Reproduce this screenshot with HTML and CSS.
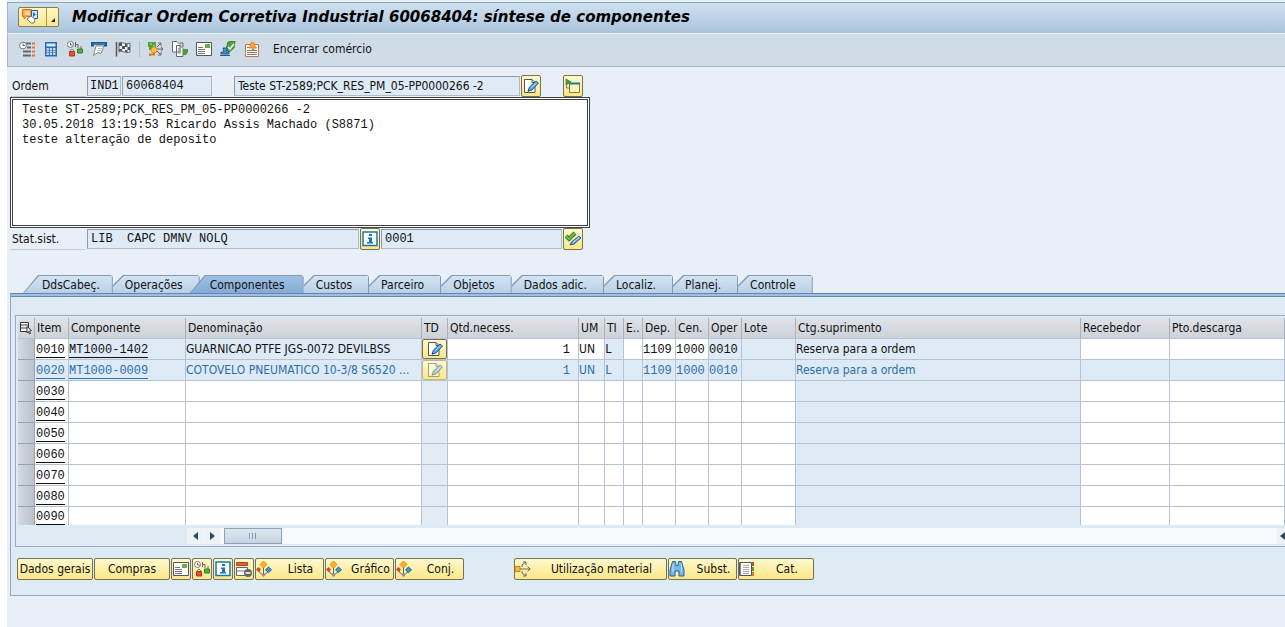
FILE: index.html
```html
<!DOCTYPE html>
<html lang="pt-BR">
<head>
<meta charset="utf-8">
<title>Modificar Ordem Corretiva Industrial</title>
<link rel="stylesheet" href="styles.css">
</head>
<body>
<svg class="defs" aria-hidden="true">
  <symbol id="i-clocklist" viewBox="0 0 16 16">
    <path d="M7 2.500h5M8 6.500h4M4 10.500h8M4 14.500h8" stroke="#666" stroke-width="2"/>
    <path d="M13 2.500h3M13 6.500h3M13 10.500h3M13 14.500h3" stroke="#e8762c" stroke-width="2"/>
    <circle cx="4" cy="4.500" r="3.400" fill="#fff" stroke="#777"/><path d="M4 2.500v2h2" fill="none" stroke="#555"/>
  </symbol>
  <symbol id="i-calc" viewBox="0 0 16 16">
    <path d="M2 1h12v14.500H2z" fill="#2b6ca8"/><path d="M3.500 2.500h9v3h-9z" fill="#d6e8f6"/>
    <path d="M3.500 8h9M3.500 10.500h9M3.500 13h9" stroke="#c4def2" stroke-width="1.800" stroke-dasharray="2.300 1"/>
  </symbol>
  <symbol id="i-clockbox" viewBox="0 0 16 16">
    <circle cx="3.500" cy="3.500" r="3" fill="#fff" stroke="#777"/><path d="M3.500 2v2h2" fill="none" stroke="#555"/>
    <path d="M8.500 1v5M8.500 3.500H11V7M14 5v3" fill="none" stroke="#666"/>
    <path d="M2.500 10.500h5V15h-5z" fill="#e2532b" stroke="#b33a1b"/><path d="M3 10l2-2 2 2" fill="#eee" stroke="#777"/>
    <path d="M10.500 8h5v4h-5z" fill="#55ad45" stroke="#347f2a"/>
  </symbol>
  <symbol id="i-card" viewBox="0 0 16 16">
    <path d="M0 1h16v4.500h-3V4H3v1.500H0z" fill="#1d5c93"/><path d="M2 3h12" stroke="#4f96cf"/>
    <path d="M5 5h8l-3 7.500-3-1-4.500 3 1-4z" fill="#fff" stroke="#888"/><path d="M7 7.500h4M6 9.500h4" stroke="#bbb"/>
  </symbol>
  <symbol id="i-flag" viewBox="0 0 16 16">
    <path d="M1.500 1v14.500" stroke="#555" stroke-width="1.500"/><path d="M4 2c3-2 5 2 11 0v9c-5 2-7-2-11 0z" fill="#eee" stroke="#666"/>
    <path d="M4 2h3v3H4zM10 3h2.500v3H10zM7 5h3v3H7zM12.500 6H15v3h-2.500zM4 8h3v2H4zM10 9h2.500v2H10z" fill="#555"/>
  </symbol>
  <symbol id="i-tree" viewBox="0 0 16 16">
    <path d="M9 6l4-4m-3 0h3v3M8 8h7m-2-2 2 2-2 2M9 10l4 4m0-3v3h-3" fill="none" stroke="#666"/>
    <path d="M0 1h8v5L5 9H1V6H0z" fill="#55a33a"/><path d="M2 3h2M5 5h2" stroke="#c4e39a"/>
    <circle cx="6" cy="9" r="3" fill="#ffc53a" stroke="#e88a1a"/><path d="M2 15v-1.500h4V12" fill="none" stroke="#e87820" stroke-width="2"/>
  </symbol>
  <symbol id="i-docs" viewBox="0 0 16 16">
    <path d="M.500.500H5l3 3V11H.500zM4.500 4.500H8l3 3v8H4.500z" fill="#fff" stroke="#666"/>
    <path d="M6 8h3M6 10h3M6 12h3" stroke="#888"/><path d="M12 8h4v3l-2 3h-3v-5z" fill="#4b9b35"/><path d="M8 2h3v4" fill="none" stroke="#666"/>
  </symbol>
  <symbol id="i-letter" viewBox="0 0 16 16">
    <path d="M.500 1.500h15v13H.500z" fill="#fff" stroke="#555"/><path d="M9 3h5v4H9z" fill="#67b04a"/>
    <path d="M2 6.500h5M2 8.500h7M2 10.500h7M2 12.500h7" stroke="#777"/>
  </symbol>
  <symbol id="i-stamp" viewBox="0 0 16 16">
    <path d="M8 1l7-1-1 7-5 4-3-3 1-3z" fill="#55a53f" stroke="#37802a"/><path d="M8 6l2 2 4-5" fill="none" stroke="#fff" stroke-width="1.500"/>
    <path d="M3 7h4l-1 4h3v2H1v-2h3zM0 14.500h10" fill="#4b93cc" stroke="#1f5c92"/>
  </symbol>
  <symbol id="i-bell" viewBox="0 0 16 16">
    <path d="M1.500 3.500h13v12h-13z" fill="#fff" stroke="#c07838"/><path d="M3 9.500h10M3 11.500h10M3 13.500h10M3 6.500h2" stroke="#777"/>
    <path d="M5 7c2-1 1-6 3.500-6S10 6 12.500 7z" fill="#ffa829" stroke="#e5761c"/><path d="M8 7.500h2V9H8z" fill="#e5761c"/>
  </symbol>
  <symbol id="i-edit" viewBox="0 0 16 16">
    <path d="M1.500 1.500H9l3 3v10H1.500z" fill="#fff" stroke="#555"/><path d="M9 1.500v3h3" fill="none" stroke="#555"/>
    <path d="M5 13l1.500-4L13 3l2.500 2-6.500 7z" fill="#5aa7de" stroke="#1c5d96"/><path d="M4.500 13.500l2-.500-1-1z" fill="#222"/><path d="M8.500 9.500L13.500 5" stroke="#b9def5"/>
  </symbol>
  <symbol id="i-open" viewBox="0 0 16 16">
    <path d="M4.500 5.500h10v9h-10z" fill="#fff6b8" stroke="#8a7c45"/><path d="M4 5.500h11" stroke="#2772ab" stroke-width="2"/>
    <path d="M1 1l5 3-5 3z" fill="#48983a" stroke="#48983a"/><path d="M1.500 2v8H4" fill="none" stroke="#777"/>
  </symbol>
  <symbol id="i-info" viewBox="0 0 16 16">
    <path d="M1 1h14v13.500H1z" fill="#fff" stroke="#1c75b4" stroke-width="1.500"/>
    <path d="M7 3h3v2H7zM6 6.500h4V11h1v1.500H5V11h2V8H6z" fill="#1c75b4"/>
  </symbol>
  <symbol id="i-okedit" viewBox="0 0 16 16">
    <path d="M1 5l3 3 6-6" fill="none" stroke="#2f7a25" stroke-width="4"/><path d="M1 5l3 3 6-6" fill="none" stroke="#73bd50" stroke-width="2"/>
    <path d="M5 14l1.500-3L14 5l2 2-7 6z" fill="#64a7dc" stroke="#275c91"/><path d="M8 11.500L14.500 6" stroke="#c3e1f5"/>
  </symbol>
  <symbol id="i-delrow" viewBox="0 0 16 16">
    <path d="M.500 1.500h11v3H.500z" fill="#e6602c" stroke="#b6451b"/><path d="M.500 6.500h11v8H.500z" fill="#fff" stroke="#666"/><path d="M0 10h9" stroke="#777"/>
    <circle cx="12" cy="12" r="4" fill="#666"/><path d="M9.500 12h5" stroke="#fff" stroke-width="1.500"/>
  </symbol>
  <symbol id="i-diamonds" viewBox="0 0 16 16">
    <path d="M7.500 5v9M3 9c0 3 2 4 4.500 4.500C10 13 12 12 12 9" fill="none" stroke="#666"/>
    <path d="M7.500 0L11 3.500 7.500 7 4 3.500z" fill="#ffb31f" stroke="#e48a16"/><path d="M2.500 6L5 8.500 2.500 11 0 8.500z" fill="#df4522"/>
    <path d="M12.500 6l3 2.800-3 2.800-3-2.800z" fill="#4796ca" stroke="#1f5d91"/><path d="M7.500 13l1.800 1.500L7.500 16l-1.800-1.500z" fill="#9a8acb"/>
  </symbol>
  <symbol id="i-spread" viewBox="0 0 16 16">
    <path d="M0 5.500h5v5H0z" fill="#ffb42b" stroke="#d98516"/><path d="M5 8h10.500m-3-2.500 2.500 2.500-2.500 2.500M7 6V4l4-3m-3 0h3v3M7 10v2l4 3m-3 0h3v-3" fill="none" stroke="#666"/>
  </symbol>
  <symbol id="i-binoc" viewBox="0 0 16 16">
    <path d="M3.500.500h3l.500 4h2l.500-4h3L15 9v6h-5v-5H6v5H1V9z" fill="#75b7e5" stroke="#1e659c"/><path d="M4 3v8M12.500 3v8" stroke="#c5e3f7"/>
  </symbol>
  <symbol id="i-book" viewBox="0 0 16 16">
    <path d="M.500 1.500h12v13H.500z" fill="#fff" stroke="#555"/><path d="M1.500 2v12" stroke="#888"/><path d="M4 4.500h6M4 6.500h6M4 8.500h6M4 10.500h6M4 12.500h6" stroke="#aaa"/>
    <path d="M14 1v4" stroke="#d9402a" stroke-width="2"/><path d="M14 6v4" stroke="#4b9c3c" stroke-width="2"/><path d="M14 11v4" stroke="#e17a2a" stroke-width="2"/>
  </symbol>
  <symbol id="i-menu" viewBox="0 0 16 16">
    <path d="M.500.500h9v7h-5L2 10V7.500H.500z" fill="#ffa640" stroke="#d87420"/><path d="M2.500 3h5M2.500 5h5" stroke="#fff"/>
    <path d="M9.500 1.500h6v8h-6z" fill="#d5eafa" stroke="#1f609a"/><path d="M11 3l3 2.500L11 8z" fill="#1f75b5"/>
    <path d="M5 10l4-3 4 3-1 4H9z" fill="#fff" stroke="#777"/>
  </symbol>
  <symbol id="i-select" viewBox="0 0 14 14">
    <path d="M1.500 1.500h8v9h-8zM1.500 4h8M1.500 7h8" fill="#fff" stroke="#333"/><path d="M8 5.500l4.500 4-2 .500 1 2.500-1 .500-1-2.500L8 12z" fill="#fff" stroke="#333"/>
  </symbol>
</svg>

<div class="app">
  <header class="titlebar">
    <div class="menu-split">
      <button class="menu-main" type="button" aria-label="Serviços"><svg class="icon"><use href="#i-menu"/></svg></button>
      <button class="menu-drop" type="button" aria-label="Mais"></button>
    </div>
    <h1>Modificar Ordem Corretiva Industrial 60068404: síntese de componentes</h1>
  </header>

  <div class="toolbar">
    <button type="button" aria-label="Datas"><svg class="icon"><use href="#i-clocklist"/></svg></button>
    <button type="button" aria-label="Calcular"><svg class="icon"><use href="#i-calc"/></svg></button>
    <button type="button" aria-label="Programar"><svg class="icon"><use href="#i-clockbox"/></svg></button>
    <button type="button" aria-label="Imprimir"><svg class="icon"><use href="#i-card"/></svg></button>
    <button type="button" aria-label="Encerrar"><svg class="icon"><use href="#i-flag"/></svg></button>
    <span class="sep"></span>
    <button type="button" aria-label="Estrutura"><svg class="icon"><use href="#i-tree"/></svg></button>
    <button type="button" aria-label="Documentos"><svg class="icon"><use href="#i-docs"/></svg></button>
    <button type="button" aria-label="Carta"><svg class="icon"><use href="#i-letter"/></svg></button>
    <button type="button" aria-label="Autorização"><svg class="icon"><use href="#i-stamp"/></svg></button>
    <button type="button" aria-label="Nota"><svg class="icon"><use href="#i-bell"/></svg></button>
    <button class="text" type="button">Encerrar comércio</button>
  </div>

  <main>
    <section class="head">
      <div class="field-row">
        <label for="ordem">Ordem</label>
        <input class="mono w-type" id="tipo" aria-label="Tipo de ordem" value="IND1" readonly>
        <input class="mono w-order" id="ordem" value="60068404" readonly>
        <input class="w-text" aria-label="Texto breve" value="Teste ST-2589;PCK_RES_PM_05-PP0000266 -2" readonly>
        <button class="btn square" type="button" aria-label="Texto descritivo"><svg class="icon"><use href="#i-edit"/></svg></button>
        <button class="btn square apart" type="button" aria-label="Abrir"><svg class="icon"><use href="#i-open"/></svg></button>
      </div>
      <textarea class="mono" aria-label="Texto descritivo" spellcheck="false">Teste ST-2589;PCK_RES_PM_05-PP0000266 -2
30.05.2018 13:19:53 Ricardo Assis Machado (S8871)
teste alteração de deposito</textarea>
      <div class="field-row">
        <label for="stat">Stat.sist.</label>
        <input class="mono w-stat" id="stat" value="LIB  CAPC DMNV NOLQ" readonly>
        <button class="btn square" type="button" aria-label="Status"><svg class="icon"><use href="#i-info"/></svg></button>
        <input class="mono w-user" aria-label="Status do usuário" value="0001" readonly>
        <button class="btn square" type="button" aria-label="Definir status"><svg class="icon"><use href="#i-okedit"/></svg></button>
      </div>
    </section>

    <nav class="tabs" role="tablist">
      <button type="button" role="tab" class="first"><span>DdsCabeç.</span></button>
      <button type="button" role="tab"><span>Operações</span></button>
      <button type="button" role="tab" class="active" aria-selected="true"><span>Componentes</span></button>
      <button type="button" role="tab"><span>Custos</span></button>
      <button type="button" role="tab"><span>Parceiro</span></button>
      <button type="button" role="tab"><span>Objetos</span></button>
      <button type="button" role="tab"><span>Dados adic.</span></button>
      <button type="button" role="tab"><span>Localiz.</span></button>
      <button type="button" role="tab"><span>Planej.</span></button>
      <button type="button" role="tab"><span>Controle</span></button>
    </nav>

    <section class="panel">
      <div class="grid-box">
        <table>
          <colgroup><col class="c-sel"><col class="c-item"><col class="c-comp"><col class="c-den"><col class="c-um"><col class="c-qty"><col class="c-um"><col class="c-ti"><col class="c-ti"><col class="c-code"><col class="c-code"><col class="c-code"><col class="c-lote"><col class="c-ctg"><col class="c-rec"><col></colgroup>
          <thead>
            <tr><th class="pick"><svg><use href="#i-select"/></svg></th><th>Item</th><th>Componente</th><th>Denominação</th><th>TD</th><th>Qtd.necess.</th><th>UM</th><th>TI</th><th>E..</th><th>Dep.</th><th>Cen.</th><th>Oper</th><th>Lote</th><th>Ctg.suprimento</th><th>Recebedor</th><th>Pto.descarga</th></tr>
          </thead>
          <tbody>
            <tr><td class="sel"></td><td class="mono item"><a href="#0010">0010</a></td><td class="ro mono"><a href="#c1">MT1000-1402</a></td><td class="ro">GUARNICAO PTFE JGS-0072 DEVILBSS</td><td class="td"><button class="btn cell" type="button" aria-label="Texto do item"><svg class="icon"><use href="#i-edit"/></svg></button></td><td class="mono num"><input aria-label="Quantidade" value="1"></td><td><input aria-label="Unidade" value="UN"></td><td class="ro mono">L</td><td><input aria-label="E"></td><td class="mono"><input aria-label="Depósito" value="1109"></td><td class="mono"><input aria-label="Centro" value="1000"></td><td class="ro mono">0010</td><td class="ro"></td><td class="ro">Reserva para a ordem</td><td><input aria-label="Recebedor"></td><td><input aria-label="Ponto de descarga"></td></tr>
            <tr class="locked"><td class="sel"></td><td class="mono item"><a href="#0020">0020</a></td><td class="mono"><a href="#c2">MT1000-0009</a></td><td>COTOVELO PNEUMATICO 10-3/8 S6520 ...</td><td class="td"><button class="btn cell" type="button" disabled aria-label="Texto do item"><svg class="icon"><use href="#i-edit"/></svg></button></td><td class="mono num">1</td><td>UN</td><td class="mono">L</td><td></td><td class="mono">1109</td><td class="mono">1000</td><td class="mono">0010</td><td></td><td>Reserva para a ordem</td><td></td><td></td></tr>
            <tr><td class="sel"></td><td class="mono item"><a href="#0030">0030</a></td><td></td><td></td><td class="td"></td><td></td><td></td><td></td><td></td><td></td><td></td><td></td><td></td><td class="ro"></td><td></td><td></td></tr>
            <tr><td class="sel"></td><td class="mono item"><a href="#0040">0040</a></td><td></td><td></td><td class="td"></td><td></td><td></td><td></td><td></td><td></td><td></td><td></td><td></td><td class="ro"></td><td></td><td></td></tr>
            <tr><td class="sel"></td><td class="mono item"><a href="#0050">0050</a></td><td></td><td></td><td class="td"></td><td></td><td></td><td></td><td></td><td></td><td></td><td></td><td></td><td class="ro"></td><td></td><td></td></tr>
            <tr><td class="sel"></td><td class="mono item"><a href="#0060">0060</a></td><td></td><td></td><td class="td"></td><td></td><td></td><td></td><td></td><td></td><td></td><td></td><td></td><td class="ro"></td><td></td><td></td></tr>
            <tr><td class="sel"></td><td class="mono item"><a href="#0070">0070</a></td><td></td><td></td><td class="td"></td><td></td><td></td><td></td><td></td><td></td><td></td><td></td><td></td><td class="ro"></td><td></td><td></td></tr>
            <tr><td class="sel"></td><td class="mono item"><a href="#0080">0080</a></td><td></td><td></td><td class="td"></td><td></td><td></td><td></td><td></td><td></td><td></td><td></td><td></td><td class="ro"></td><td></td><td></td></tr>
            <tr class="last"><td class="sel"></td><td class="mono item"><a href="#0090">0090</a></td><td></td><td></td><td class="td"></td><td></td><td></td><td></td><td></td><td></td><td></td><td></td><td></td><td class="ro"></td><td></td><td></td></tr>
          </tbody>
        </table>
        <div class="scroll">
          <button type="button" class="arrow left" aria-label="Rolar à esquerda"></button>
          <button type="button" class="arrow right" aria-label="Rolar à direita"></button>
          <div class="track"><div class="thumb"><i></i></div></div>
          <button type="button" class="arrow left end" aria-label="Página à esquerda"></button>
        </div>
      </div>

      <div class="actions">
        <button class="btn wide" type="button"><span>Dados gerais</span></button>
        <button class="btn wide" type="button"><span>Compras</span></button>
        <button class="btn square" type="button" aria-label="Texto"><svg class="icon"><use href="#i-letter"/></svg></button>
        <button class="btn square" type="button" aria-label="Programar"><svg class="icon"><use href="#i-clockbox"/></svg></button>
        <button class="btn square" type="button" aria-label="Informação"><svg class="icon"><use href="#i-info"/></svg></button>
        <button class="btn square" type="button" aria-label="Eliminar linha"><svg class="icon"><use href="#i-delrow"/></svg></button>
        <button class="btn mid" type="button"><svg class="icon"><use href="#i-diamonds"/></svg><span>Lista</span></button>
        <button class="btn mid" type="button"><svg class="icon"><use href="#i-diamonds"/></svg><span>Gráfico</span></button>
        <button class="btn mid" type="button"><svg class="icon"><use href="#i-diamonds"/></svg><span>Conj.</span></button>
        <button class="btn long" type="button"><svg class="icon"><use href="#i-spread"/></svg><span>Utilização material</span></button>
        <button class="btn mid" type="button"><svg class="icon"><use href="#i-binoc"/></svg><span>Subst.</span></button>
        <button class="btn wide" type="button"><svg class="icon"><use href="#i-book"/></svg><span>Cat.</span></button>
      </div>
    </section>
  </main>
</div>
</body>
</html>
```
FILE: styles.css
```css
* { box-sizing: border-box; }

:root {
  --sans: "DejaVu Sans Condensed", "Noto Sans", sans-serif;
  --mono: "Liberation Mono", monospace;
  --line: #b7c2d3;
  --ro: #deeaf5;
}

body {
  margin: 0;
  background: #fff;
  color: #111;
  font: 12px/16px var(--sans);
  overflow-x: hidden;
}

button, input, textarea { font: inherit; color: inherit; margin: 0; }
button { padding: 0; border: 0; background: none; }
.defs { position: absolute; width: 0; height: 0; }
.icon { display: block; flex: none; width: 16px; height: 16px; }
.mono, .mono input { font-family: var(--mono); }

.app {
  min-height: 100vh;
  margin-left: 7px;
  padding-top: 2px;
  background: #e8eff6;
}

.titlebar {
  display: flex;
  align-items: center;
  gap: 13px;
  height: 31px;
  padding: 0 10px 2px;
  border-top: 1px solid #8ea5c2;
  border-left: 1px solid #a5b7cf;
  background: linear-gradient(#cfe0ee, #bdd3e7 50%, #a9c3dc);
}

h1 {
  margin: 0;
  font-family: "DejaVu Sans", sans-serif;
  font-size: 15px;
  line-height: 24px;
  font-style: italic;
  font-weight: bold;
  color: #000;
  white-space: nowrap;
}

.menu-split {
  display: flex;
  height: 20px;
  border: 1px solid #8b7d49;
  border-radius: 2px;
  background: linear-gradient(#fff8c4, #fbe793);
}
.menu-main { display: flex; justify-content: center; align-items: center; width: 28px; padding-right: 6px; border-right: 1px solid #a99a5c; }
.menu-drop { display: flex; justify-content: center; align-items: flex-end; width: 11px; padding-bottom: 4px; }
.menu-drop::after { content: ""; border-left: 4px solid transparent; border-bottom: 4px solid #222; }

.toolbar {
  display: flex;
  align-items: center;
  gap: 8px;
  height: 34px;
  padding: 0 11px 2px;
  border: solid #a5b6cd;
  border-width: 0 0 1px 1px;
  border-top: 1px solid #e9f0f6;
  background: #cfdce8;
}
.sep { width: 1px; height: 16px; background: #a9bccd; }
.toolbar .text { margin-left: 5px; }

.head { width: 580px; margin: 8px 0 0 3px; }
.field-row { display: flex; align-items: center; height: 22px; gap: 1px; }
.field-row label {
  width: 76px;
  padding-left: 2px;
  line-height: 20px;
  border-bottom: 1px solid #c6ced8;
}
.field-row input {
  height: 20px;
  padding: 0 3px;
  border: 1px solid;
  border-color: #939ca6 #b3bac2 #b3bac2 #939ca6;
  outline: 0;
  background: var(--ro);
}
.field-row .w-type { width: 34px; padding: 0 2px; }
.w-order { width: 90px; margin-right: 21px; }
.w-text { width: 286px; }
.w-stat { width: 272px; }
.w-user { flex: 1; }
.field-row .apart { margin-left: 21px; }
.field-row:last-child .square:last-child { margin-right: 7px; }

textarea {
  display: block;
  width: 100%;
  height: 131px;
  padding: 3px 9px;
  border: 3px double #3d4045;
  outline: 0;
  resize: none;
  line-height: 15px;
  background: #fff;
}

.btn {
  display: flex;
  align-items: center;
  height: 22px;
  border: 1px solid #77724f;
  border-radius: 2px;
  background: linear-gradient(#fff9d0, #fdeea2 60%, #fbe68a);
  color: #111;
  white-space: nowrap;
}
.btn span { flex: 1; text-align: center; }
.btn .icon + span { padding-left: 6px; }
.square { justify-content: center; width: 20px; }

.tabs { display: flex; height: 18px; margin: 25px 0 0 16px; }
.tabs button {
  position: relative;
  z-index: 0;
  height: 18px;
  padding: 2px 17px 0 12px;
  white-space: nowrap;
}
.tabs .first { padding: 2px 13px 0 19px; }
.tabs button::before, .tabs button::after {
  content: "";
  position: absolute;
  z-index: -1;
  inset: 0;
  background: #8499b8;
  clip-path: polygon(0 10px, 10px 0, calc(100% - 2px) 0, 100% 2px, 100% 100%, 0 100%);
}
.tabs button::after {
  inset: 1px 1px 0 0;
  background: linear-gradient(#d3e4f2, #b8d0e8);
  clip-path: polygon(1px 10px, 11px 0, 100% 0, 100% 100%, 0 100%, 0 11px);
}
.tabs .first::before, .tabs .active::before { clip-path: polygon(0 100%, 15px 0, calc(100% - 2px) 0, 100% 2px, 100% 100%); }
.tabs .first::after, .tabs .active::after { clip-path: polygon(1px 100%, 16px 0, 100% 0, 100% 100%); }
.tabs .active { z-index: 1; padding: 2px 19px 0 10px; }
.tabs .active::before, .tabs .active::after { left: -10px; }
.tabs .active::after { background: linear-gradient(#9fc0e3, #84abd7); }

.panel {
  margin-left: 3px;
  padding: 21px 0 15px 4px;
  border: 1px solid #8fa8c8;
  border-top-color: #6386b2;
  border-right: 0;
  background: #deebf5;
  box-shadow: inset 0 2px #a3bedc, inset 0 3px #6386b2;
}

.grid-box {
  padding: 2px 0 2px 2px;
  border: 1px solid #94abc6;
  border-right: 0;
}

table {
  width: 100%;
  border-collapse: separate;
  border-spacing: 0;
  table-layout: fixed;
}
.c-sel { width: 17px; } .c-item { width: 34px; } .c-comp { width: 117px; }
.c-den { width: 236px; } .c-um { width: 26px; } .c-qty { width: 131px; }
.c-ti { width: 19px; } .c-code { width: 33px; } .c-lote { width: 54px; }
.c-ctg { width: 285px; } .c-rec { width: 89px; }

th, td {
  height: 21px;
  padding: 0;
  border-right: 1px solid var(--line);
  border-bottom: 1px solid var(--line);
  overflow: hidden;
  white-space: nowrap;
  line-height: 18px;
  text-align: left;
}
th { padding-left: 2px; font-weight: normal; background: linear-gradient(#dfe2e7, #ced2d9); border-right-color: #a9b1bc; }
th.pick { padding: 0 0 0 1px; }
.pick svg { display: block; width: 14px; height: 14px; }
td { background: #fff; }
td.mono { padding-top: 1px; }
td.item { padding-left: 1px; }
.ro, .locked td { background: var(--ro); }
.locked td { color: #2a6fae; }
td.td { background: #e3ebf3; }
td.sel { background: linear-gradient(90deg, #d4dae1, #b9c1cc); border-color: #98a3b2; }
.last td { height: 18px; border-bottom: 0; line-height: 16px; }
td input { display: block; width: 100%; height: 18px; padding: 0; border: 0; outline: 0; background: none; }
.num, .num input { text-align: right; }
td.num { padding-right: 8px; }
td a { color: inherit; text-decoration: none; border-bottom: 1px solid; }
.cell { justify-content: center; width: 25px; height: 20px; }
.cell:disabled { border-color: #bdb893; }
.cell:disabled .icon { opacity: .5; }

.scroll { display: flex; height: 16px; margin: 3px 0 0 169px; background: #f3f6fb; }
.arrow { display: flex; align-items: center; justify-content: center; width: 16px; margin-right: 1px; background: #eef3f9; }
.arrow::after { content: ""; border: 4px solid transparent; }
.left::after { border-right: 5px solid #34495c; border-left: 0; }
.right::after { border-left: 5px solid #34495c; border-right: 0; }
.track { flex: 1; padding-left: 3px; background: #f8fafd; }
.thumb { display: flex; align-items: center; justify-content: center; width: 58px; height: 16px; border: 1px solid #8fa2b6; background: linear-gradient(#dfe8f0, #c5d3e0); }
.thumb i { width: 8px; height: 6px; background: repeating-linear-gradient(90deg, #8a9bac 0 1px, transparent 1px 3px); }
.end { width: 8px; margin: 0 0 0 1px; justify-content: flex-end; overflow: hidden; }

.actions { display: flex; gap: 1px; padding: 11px 2px 0; }
.actions .wide { width: 76px; }
.actions .mid { width: 69px; }
.actions .long { width: 153px; margin-left: 49px; }
```
